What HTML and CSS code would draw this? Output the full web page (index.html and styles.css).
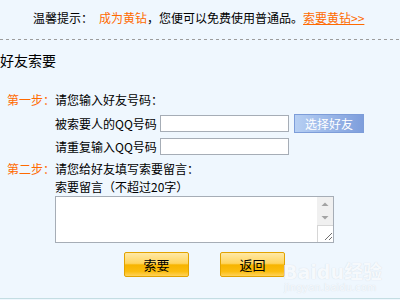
FILE: index.html
```html
<!DOCTYPE html>
<html lang="zh-CN">
<head>
    <meta charset="UTF-8">
    <title>好友索要</title>
    <link rel="stylesheet" href="styles.css">
</head>
<body>
    <div class="page">
        <p class="tip">
            温馨提示：<span class="orange hl">成为黄钻</span>，您便可以免费使用普通品。<a href="#" class="orange">索要黄钻&gt;&gt;</a>
        </p>
        <div class="dash"></div>

        <h2>好友索要</h2>

        <div class="step">
            <span class="step-no">第一步：</span>
            <div class="step-body">
                <p class="line">请您输入好友号码：</p>
                <div class="field">
                    <label for="qq1">被索要人的QQ号码</label>
                    <input type="text" id="qq1">
                    <button type="button" class="pick">选择好友</button>
                </div>
                <div class="field">
                    <label for="qq2">请重复输入QQ号码</label>
                    <input type="text" id="qq2">
                </div>
            </div>
        </div>

        <div class="step step2">
            <span class="step-no">第二步：</span>
            <div class="step-body">
                <p class="line">请您给好友填写索要留言：</p>
                <p class="line">索要留言（不超过20字）</p>
                <div class="msg-box">
                    <textarea id="msg"></textarea>
                    <div class="sbar">
                        <svg width="16" height="14" viewBox="0 0 16 14"><path d="M4.5 9L8 5.5 11.5 9z" fill="#a3a3a3"/></svg>
                        <svg width="16" height="14" viewBox="0 0 16 14"><path d="M4.5 5L8 8.5 11.5 5z" fill="#a3a3a3"/></svg>
                    </div>
                    <div class="grip">
                        <svg width="16" height="16" viewBox="0 0 16 16"><path d="M14 7L7 14M14 11L11 14" stroke="#707070" stroke-width="1"/></svg>
                    </div>
                </div>
            </div>
        </div>

        <div class="actions">
            <button type="button" class="gold">索要</button>
            <button type="button" class="gold">返回</button>
        </div>

        <div class="watermark">
            <span class="wm-big">Baidu经验</span>
            <span class="wm-small">jingyan.baidu.com</span>
        </div>
    </div>
</body>
</html>
```

FILE: styles.css
```css
body {
    margin: 0;
    background-color: #eff7fe;
    font-family: "Noto Sans CJK SC", "DejaVu Sans", sans-serif;
    font-size: 12px;
    color: #000;
}

.page {
    position: relative;
    height: 298px;
    border-bottom: 1px solid #c3dde2;
    overflow: hidden;
}

p {
    margin: 0;
}

.orange {
    color: #ff6a00;
}

.tip {
    padding: 9px 0 0 33px;
    line-height: 18px;
    white-space: nowrap;
}

.tip .hl {
    margin-left: 6px;
}

.tip a {
    text-decoration: underline;
}

.dash {
    margin-top: 12px;
    height: 1px;
    background: repeating-linear-gradient(to right, #9c9c9c 0 3px, transparent 3px 6px);
}

h2 {
    margin: 10px 0 0;
    font-size: 14px;
    font-weight: normal;
    line-height: 20px;
}

.step {
    display: flex;
    margin-top: 21px;
    padding-left: 7px;
}

.step2 {
    margin-top: 4px;
}

.step-no {
    width: 48px;
    color: #ff6a00;
    line-height: 18px;
}

.line {
    line-height: 18px;
    white-space: nowrap;
}

.field {
    display: flex;
    align-items: center;
    height: 19px;
    margin-top: 5px;
}

.field + .field {
    margin-top: 4px;
}

.field label {
    width: 105px;
    white-space: nowrap;
}

.field input {
    box-sizing: border-box;
    width: 129px;
    height: 17px;
    margin: 0;
    padding: 0 2px;
    border: 1px solid #a6adb6;
    background-color: #fff;
    font: inherit;
}

.pick {
    box-sizing: border-box;
    width: 70px;
    height: 19px;
    margin-left: 5px;
    padding: 0;
    border: 1px solid #7d9dd9;
    background: linear-gradient(to right, #b6cff3, #7e9edc);
    color: #fff;
    font: inherit;
    line-height: 17px;
}

.msg-box {
    position: relative;
    width: 279px;
    height: 47px;
}

textarea {
    display: block;
    box-sizing: border-box;
    width: 100%;
    height: 100%;
    margin: 0;
    padding: 2px 18px 2px 2px;
    border: 1px solid #a6adb6;
    background-color: #fff;
    overflow: hidden;
    resize: none;
    font: inherit;
}

/* fake classic scrollbar drawn over the textarea */
.sbar {
    position: absolute;
    top: 1px;
    right: 1px;
    width: 16px;
    height: 28px;
    background-color: #f0f0f0;
}

.sbar svg,
.grip svg {
    display: block;
}

.grip {
    position: absolute;
    right: 1px;
    bottom: 1px;
    width: 15px;
    height: 16px;
    border-top: 1px solid #d6d6d6;
    border-left: 1px solid #d6d6d6;
    background-color: #fff;
}

.actions {
    display: flex;
    gap: 31px;
    margin-top: 9px;
    padding-left: 124px;
}

.gold {
    box-sizing: border-box;
    width: 65px;
    height: 25px;
    padding: 0;
    border: 1px solid #e2a300;
    border-radius: 2px;
    background: linear-gradient(to bottom, #ffe9a6 0%, #ffd560 45%, #f7b400 52%, #fbbd10 80%, #ffd25a 100%);
    color: #000;
    font: inherit;
    font-size: 13px;
    line-height: 23px;
}

.watermark {
    position: absolute;
    left: 283px;
    top: 262px;
    display: flex;
    flex-direction: column;
    color: #f6f9fc;
    text-shadow: 0 0 1px #cfd8e0;
    pointer-events: none;
}

.wm-big {
    font-family: "DejaVu Sans", "Noto Sans CJK SC", sans-serif;
    font-size: 19px;
    font-weight: bold;
    line-height: 20px;
}

.wm-small {
    font-family: "DejaVu Sans", sans-serif;
    font-size: 10px;
    line-height: 12px;
    margin-left: 1px;
}
```
